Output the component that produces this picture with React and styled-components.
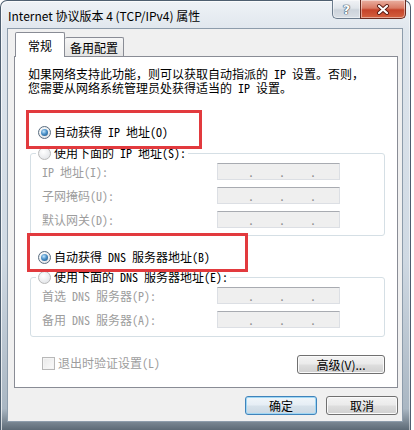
import React from 'react';
import styled, { createGlobalStyle } from 'styled-components';

const SONG = `"Noto Sans Mono CJK SC", "Noto Sans CJK SC", monospace`;
const UI = `"Noto Sans CJK SC", "Noto Sans", sans-serif`;

const GlobalStyle = createGlobalStyle`
  html, body { margin: 0; padding: 0; background: #ffffff; }
  body { width: 414px; height: 430px; overflow: hidden; }
`;

const Window = styled.div`
  width: 411px;
  height: 430px;
  box-sizing: border-box;
  display: flex;
  flex-direction: column;
  border: 1px solid #4e5f70;
  border-bottom: none;
  border-radius: 7px 7px 0 0;
  background: linear-gradient(to bottom, #eef2f6 0, #dfe6ed 30px, #cfd9e3 60%, #aab7c3 95%, #5d6a76 100%);
  box-shadow: inset 1px 1px 0 rgba(255, 255, 255, 0.7), inset -1px 0 0 rgba(255, 255, 255, 0.5);
`;

const TitleBar = styled.div`
  height: 27px;
  display: flex;
  align-items: flex-start;
  flex: none;
`;

const Title = styled.div`
  margin: 7px 0 0 7px;
  font: 12px/16px ${UI};
  color: #000;
  white-space: nowrap;
`;

const Caption = styled.div`
  display: flex;
  margin: -1px 4px 0 auto;
`;

const CapButton = styled.div`
  width: ${p => p.$w}px;
  height: 19px;
  box-sizing: border-box;
  display: flex;
  align-items: center;
  justify-content: center;
  border: 1px solid ${p => (p.$close ? '#6b2b20' : '#6c7c8d')};
  border-top: none;
  border-right: ${p => (p.$close ? '1px solid #6b2b20' : 'none')};
  border-radius: ${p => (p.$close ? '0 0 5px 0' : '0 0 0 5px')};
  background: ${p =>
    p.$close
      ? 'linear-gradient(to bottom, #eab0a2 0%, #d97a64 45%, #c5432a 55%, #d4613f 100%)'
      : 'linear-gradient(to bottom, #f1f3f6 0%, #e0e5ea 45%, #ccd3db 55%, #d9dfe5 100%)'};
  box-shadow: inset 0 0 0 1px rgba(255, 255, 255, 0.45);
`;

const HelpMark = styled.span`
  font: bold 13px/13px "DejaVu Sans", sans-serif;
  color: #ffffff;
  text-shadow: 0 0 1px #2f4255, 0 0 1px #2f4255, 0 0 1px #2f4255;
`;

const Client = styled.div`
  flex: 1;
  margin: 0 7px 8px 6px;
  border: 1px solid #8d9cab;
  background: #f0f0f0;
  padding: 3px 4px 0 6px;
  display: flex;
  flex-direction: column;
`;

const TabStrip = styled.div`
  height: 25px;
  margin-bottom: -1px;
  padding-left: 1px;
  display: flex;
  position: relative;
  z-index: 1;
`;

const Tab = styled.div`
  box-sizing: border-box;
  height: ${p => (p.$active ? 25 : 19)}px;
  margin-top: ${p => (p.$active ? 0 : 5)}px;
  padding: ${p => (p.$active ? '5px 12px 0' : '2px 5px 0')};
  border: 1px solid #898c95;
  border-bottom: none;
  border-left: ${p => (p.$active ? '1px solid #898c95' : 'none')};
  border-radius: 2px 2px 0 0;
  background: ${p => (p.$active ? '#ffffff' : 'linear-gradient(to bottom, #f6f6f6, #e4e4e4)')};
  font: 12px/16px ${UI};
  color: #000;
`;

const Pane = styled.div`
  border: 1px solid #898c95;
  background: #ffffff;
  padding: 10px 12px 13px 15px;
  display: flex;
  flex-direction: column;
`;

const Intro = styled.p`
  margin: 0 0 0 -2px;
  font: 12px/14px ${SONG};
  color: #000;
`;

const RadioRow = styled.div`
  position: relative;
  height: 14px;
  display: flex;
  align-items: center;
  gap: 3px;
  padding-left: ${p => p.$pad}px;
  margin-top: ${p => p.$top || 0}px;
  font: 12px/14px ${SONG};
  color: #000;
  white-space: nowrap;
`;

const Radio = styled.span`
  width: 13px;
  height: 13px;
  box-sizing: border-box;
  flex: none;
  border-radius: 50%;
  border: 1px solid ${p => (p.$on ? '#5a6d80' : '#b9b9b9')};
  background: radial-gradient(circle at 40% 35%, #ffffff, #dcdfe3);
  display: flex;
  align-items: center;
  justify-content: center;

  &::after {
    content: '';
    display: ${p => (p.$on ? 'block' : 'none')};
    width: 7px;
    height: 7px;
    border-radius: 50%;
    background: radial-gradient(circle at 40% 35%, #c4e6fc 0, #4a90c8 45%, #184c7a 100%);
  }
`;

const Mark = styled.span`
  position: absolute;
  left: ${p => p.$x}px;
  top: ${p => p.$y}px;
  width: ${p => p.$w}px;
  height: ${p => p.$h}px;
  box-sizing: border-box;
  border: 3px solid #e23a3e;
  z-index: 2;
  pointer-events: none;
`;

const Group = styled.fieldset`
  margin: ${p => p.$top}px 0 0;
  padding: 3px 0 ${p => p.$bottom}px;
  border: 1px solid #d5dfe5;
  border-radius: 3px;
  min-width: 0;
`;

const Legend = styled.legend`
  margin-left: 5px;
  padding: 0 2px;
  background: #ffffff;
`;

const Fields = styled.div`
  display: grid;
  grid-template-columns: 175px 123px;
  row-gap: 7px;
  padding-left: 11px;
`;

const FieldLabel = styled.div`
  height: 17px;
  display: flex;
  align-items: center;
  font: 12px/14px ${SONG};
  color: #9d9d9d;
  white-space: nowrap;
`;

const IpBox = styled.div`
  width: 123px;
  height: 17px;
  box-sizing: border-box;
  background: #efefef;
  border: 1px solid #dcdfe4;
  border-top-color: #a8abb1;
  display: flex;
  align-items: flex-end;
  padding: 0 0 2px 30px;
  gap: 25px;
`;

const Dot = styled.span`
  width: 6px;
  font: 12px/10px ${SONG};
  color: #8c8c8c;
  text-align: center;
`;

const BottomRow = styled.div`
  margin-top: 18px;
  height: 19px;
  display: flex;
  align-items: center;
  justify-content: space-between;
  padding-left: 12px;
`;

const CheckRow = styled.div`
  display: flex;
  align-items: center;
  gap: 3px;
  margin-top: -3px;
  font: 12px/14px ${SONG};
  color: #9d9d9d;
`;

const CheckBox = styled.span`
  width: 13px;
  height: 13px;
  box-sizing: border-box;
  border: 1px solid #b8b8b8;
  background: linear-gradient(135deg, #e9e9e9, #fbfbfb);
  box-shadow: inset 0 0 0 1px #f4f4f4;
`;

const PushButton = styled.button`
  width: ${p => p.$w}px;
  height: 19px;
  padding: 0;
  box-sizing: border-box;
  border: 1px solid ${p => (p.$default ? '#3f83bb' : '#707070')};
  border-radius: 3px;
  background: ${p =>
    p.$default
      ? 'linear-gradient(to bottom, #f1f6fa 0%, #e6eef5 45%, #d6e1ea 55%, #cbd8e3 100%)'
      : 'linear-gradient(to bottom, #f3f3f3 0%, #ebebeb 45%, #dddddd 55%, #d0d0d0 100%)'};
  box-shadow: inset 0 0 0 1px ${p => (p.$default ? '#9fd6f3' : '#fafafa')};
  font: 12px/17px ${UI};
  color: #000;
`;

const ButtonRow = styled.div`
  margin-top: 8px;
  display: flex;
  justify-content: flex-end;
  gap: 9px;
`;

const IpField = () => (
  <IpBox>
    <Dot>.</Dot>
    <Dot>.</Dot>
    <Dot>.</Dot>
  </IpBox>
);

const CloseIcon = () => (
  <svg width="14" height="11" viewBox="0 0 14 11">
    <path d="M3 2 L11 9 M11 2 L3 9" stroke="#5a1a12" strokeWidth="4" strokeLinecap="round" />
    <path d="M3 2 L11 9 M11 2 L3 9" stroke="#ffffff" strokeWidth="2.2" strokeLinecap="round" />
  </svg>
);

const App = () => (
  <>
    <GlobalStyle />
    <Window>
      <TitleBar>
        <Title>Internet 协议版本 4 (TCP/IPv4) 属性</Title>
        <Caption>
          <CapButton $w={28}>
            <HelpMark>?</HelpMark>
          </CapButton>
          <CapButton $w={46} $close>
            <CloseIcon />
          </CapButton>
        </Caption>
      </TitleBar>
      <Client>
        <TabStrip>
          <Tab $active>常规</Tab>
          <Tab>备用配置</Tab>
        </TabStrip>
        <Pane>
          <Intro>
            如果网络支持此功能，则可以获取自动指派的 IP 设置。否则，
            <br />
            您需要从网络系统管理员处获得适当的 IP 设置。
          </Intro>

          <RadioRow $pad={8} $top={30}>
            <Radio $on />
            自动获得 IP 地址(O)
            <Mark $x={-4} $y={-15} $w={176} $h={39} />
          </RadioRow>
          <Group $top={7} $bottom={7}>
            <Legend>
              <RadioRow $pad={0}>
                <Radio />
                使用下面的 IP 地址(S):
              </RadioRow>
            </Legend>
            <Fields>
              <FieldLabel>IP 地址(I):</FieldLabel>
              <IpField />
              <FieldLabel>子网掩码(U):</FieldLabel>
              <IpField />
              <FieldLabel>默认网关(D):</FieldLabel>
              <IpField />
            </Fields>
          </Group>

          <RadioRow $pad={8} $top={14}>
            <Radio $on />
            自动获得 DNS 服务器地址(B)
            <Mark $x={-3} $y={-17} $w={221} $h={39} />
          </RadioRow>
          <Group $top={6} $bottom={8}>
            <Legend>
              <RadioRow $pad={0}>
                <Radio />
                使用下面的 DNS 服务器地址(E):
              </RadioRow>
            </Legend>
            <Fields>
              <FieldLabel>首选 DNS 服务器(P):</FieldLabel>
              <IpField />
              <FieldLabel>备用 DNS 服务器(A):</FieldLabel>
              <IpField />
            </Fields>
          </Group>

          <BottomRow>
            <CheckRow>
              <CheckBox />
              退出时验证设置(L)
            </CheckRow>
            <PushButton $w={88}>高级(V)...</PushButton>
          </BottomRow>
        </Pane>
        <ButtonRow>
          <PushButton $w={72} $default>确定</PushButton>
          <PushButton $w={72}>取消</PushButton>
        </ButtonRow>
      </Client>
    </Window>
  </>
);

export default App;
